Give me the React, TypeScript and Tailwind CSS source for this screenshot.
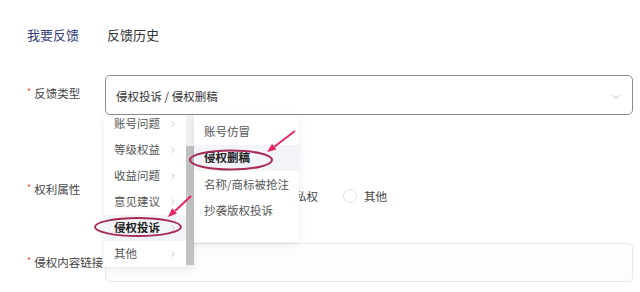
import { ChevronDown, ChevronRight } from 'lucide-react';

const FONT = "font-['Noto_Sans_CJK_SC','Noto_Sans',sans-serif]";

const TYPES = ['账号问题', '等级权益', '收益问题', '意见建议', '侵权投诉', '其他', '功能建议'];
const SUB_TYPES = ['账号仿冒', '侵权删稿', '名称/商标被抢注', '抄袭版权投诉'];
const RIGHTS = ['肖像权', '隐私权', '其他'];

function Label({ text }: { text: string }) {
  return (
    <div className="w-[78px] shrink-0 text-[11.5px] leading-[16px] text-[#444]">
      <span className="relative -top-[3px] mr-[3px] text-[9px] text-[#e54545]">*</span>
      {text}
    </div>
  );
}

function CascadeMenu() {
  return (
    <div className="absolute left-[-1px] top-[40px] z-10 flex items-start">
      <div className="flex h-[152px] bg-white shadow-[0_2px_8px_rgba(0,0,0,0.08)]">
        <ul className="-mt-[4px] w-[82px] overflow-hidden">
          {TYPES.map((t) => {
            const active = t === '侵权投诉';
            return (
              <li
                key={t}
                className={`flex h-[26px] items-center justify-between pl-[10px] pr-[8px] text-[11.5px] ${
                  active ? 'bg-[#f3f4f8] font-bold text-[#222]' : 'text-[#555]'
                }`}
              >
                {t}
                <ChevronRight size={10} className="text-[#bbb]" />
              </li>
            );
          })}
        </ul>
        <div className="flex w-[8px] flex-col bg-[#f1f1f1]">
          <div className="mt-[31px] h-[119px] bg-[#c2c2c2]" />
        </div>
      </div>
      <ul className="h-[127px] w-[105px] bg-white pt-[3px] shadow-[0_2px_8px_rgba(0,0,0,0.08)]">
        {SUB_TYPES.map((t) => {
          const active = t === '侵权删稿';
          return (
            <li
              key={t}
              className={`flex h-[26.5px] items-center pl-[10px] text-[11.5px] ${
                active ? 'bg-[#f2f4fa] font-bold text-[#222]' : 'text-[#555]'
              }`}
            >
              {t}
            </li>
          );
        })}
      </ul>
    </div>
  );
}

function Annotations() {
  return (
    <svg className="pointer-events-none absolute inset-0 z-20" width="640" height="292" viewBox="0 0 640 292">
      <ellipse cx="231" cy="160" rx="41" ry="9.5" fill="none" stroke="#a82b55" strokeWidth="2" />
      <ellipse cx="138" cy="227" rx="43" ry="9" fill="none" stroke="#a82b55" strokeWidth="2" />
      <line x1="295" y1="131" x2="274" y2="147" stroke="#e8275f" strokeWidth="2" />
      <polygon points="267,152 276.3,149.4 272.1,143.8" fill="#e8275f" />
      <line x1="191" y1="196" x2="175" y2="211" stroke="#e8275f" strokeWidth="2" />
      <polygon points="168,217 177,213.5 172.2,208.3" fill="#e8275f" />
    </svg>
  );
}

export default function App() {
  return (
    <div className={`relative h-[292px] w-[640px] overflow-hidden bg-white ${FONT}`}>
      <div className="flex gap-[28px] pl-[27px] pt-[25px] text-[13px] leading-[20px]">
        <span className="text-[#34407a]">我要反馈</span>
        <span className="text-[#333]">反馈历史</span>
      </div>

      <div className="mt-[30px] flex pl-[27px] pr-[7px]">
        <div className="pt-[10px]">
          <Label text="反馈类型" />
        </div>
        <div className="relative flex-1">
          <div className="flex h-[40px] items-center justify-between rounded-[5px] border border-[#8c8c8c] pl-[10px] pr-[10px] pt-[3px] text-[11.5px] text-[#333]">
            侵权投诉 / 侵权删稿
            <ChevronDown size={12} className="text-[#bbb]" />
          </div>
          <CascadeMenu />
        </div>
      </div>

      <div className="mt-[55px] flex h-[40px] pl-[27px] pr-[7px]">
        <div className="pt-[11px]">
          <Label text="权利属性" />
        </div>
        <div className="flex gap-[25px] pl-[77px] pt-[12px] text-[11.5px] leading-[16px] text-[#444]">
          {RIGHTS.map((r) => (
            <label key={r} className="flex items-center gap-[7px]">
              <span className="h-[14px] w-[14px] rounded-full border border-[#e2e2e2]" />
              {r}
            </label>
          ))}
        </div>
      </div>

      <div className="mt-[33px] flex pl-[27px] pr-[7px]">
        <div className="pt-[11px]">
          <Label text="侵权内容链接" />
        </div>
        <div className="h-[39px] flex-1 rounded-[5px] border border-[#e8e8e8] bg-[#fdfdfd]" />
      </div>

      <Annotations />
    </div>
  );
}
